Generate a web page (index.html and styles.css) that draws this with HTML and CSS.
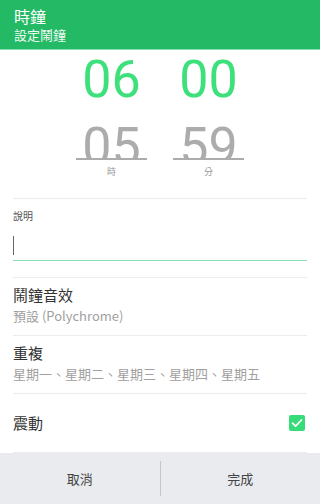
FILE: index.html
```html
<!DOCTYPE html>
<html lang="zh-Hant">
<head>
<meta charset="utf-8">
<link rel="stylesheet" href="styles.css">
</head>
<body>
<div class="app">
  <header class="header">
    <div class="title">時鐘</div>
    <div class="subtitle">設定鬧鐘</div>
  </header>
  <section class="picker">
    <div class="col">
      <div class="num current">06</div>
      <div class="clip"><div class="num prev">05</div></div>
      <div class="unit">時</div>
    </div>
    <div class="col">
      <div class="num current">00</div>
      <div class="clip"><div class="num prev">59</div></div>
      <div class="unit">分</div>
    </div>
  </section>
  <div class="divider"></div>
  <section class="desc">
    <div class="desc-label">說明</div>
    <div class="input"><span class="cursor"></span></div>
  </section>
  <div class="divider"></div>
  <div class="row">
    <div class="row-title">鬧鐘音效</div>
    <div class="row-sub">預設 (Polychrome)</div>
  </div>
  <div class="divider"></div>
  <div class="row">
    <div class="row-title">重複</div>
    <div class="row-sub">星期一、星期二、星期三、星期四、星期五</div>
  </div>
  <div class="divider"></div>
  <div class="row toggle">
    <div class="row-title">震動</div>
    <span class="check"><svg viewBox="0 0 16 16" width="16" height="16"><path d="M3.5 8.2 L6.6 11.2 L12.5 5" fill="none" stroke="#fff" stroke-width="1.8" stroke-linecap="round" stroke-linejoin="round"/></svg></span>
  </div>
  <div class="divider"></div>
  <footer class="footer">
    <div class="btn">取消</div>
    <div class="sep"></div>
    <div class="btn">完成</div>
  </footer>
</div>
</body>
</html>
```
FILE: styles.css
```css
* { box-sizing: border-box; }
html, body { margin: 0; padding: 0; }
body {
  width: 320px;
  height: 504px;
  overflow: hidden;
  background: #fff;
  font-family: "Noto Sans CJK TC", "Noto Sans", sans-serif;
}
.app { display: flex; flex-direction: column; height: 504px; }
.header {
  height: 50px;
  background: #24b964;
  color: #fff;
  padding: 5px 14px 0;
  border-bottom: 1px solid #7fe2b0;
}
.title { font-size: 16px; line-height: 22px; }
.subtitle { font-size: 13px; line-height: 16px; opacity: 0.92; }
.picker {
  display: flex;
  justify-content: center;
  gap: 26px;
}
.col { width: 71px; display: flex; flex-direction: column; align-items: center; }
.num {
  font-family: Roboto, "Noto Sans", sans-serif;
  font-size: 52px;
  line-height: 60px;
  height: 60px;
  text-align: center;
  width: 100%;
}
.current { color: #3ee07c; }
.clip {
  margin-top: 7px;
  height: 43px;
  width: 100%;
  overflow: hidden;
  border-bottom: 2px solid #acacac;
}
.num.prev {
  color: #acacac;
  line-height: 40px;
  height: 40px;
  margin-top: 10px;
}
.unit {
  margin-top: 6px;
  font-size: 9px;
  line-height: 12px;
  color: #999;
}
.divider {
  height: 1px;
  background: #ececec;
  margin: 0 13px;
  flex: none;
}
.picker + .divider { margin-top: 20px; }
.desc { padding: 10px 13px 16px; }
.desc-label { font-size: 10px; line-height: 14px; color: #555; }
.input {
  margin-top: 3px;
  height: 35px;
  border-bottom: 1px solid #86e3b6;
  position: relative;
}
.cursor {
  position: absolute;
  left: 0;
  top: 10px;
  width: 1px;
  height: 19px;
  background: #666;
}
.row { padding: 7px 13px 10px; }
.row-title { font-size: 15px; line-height: 20px; color: #333; }
.row-sub { margin-top: 2px; font-size: 13px; line-height: 18px; color: #a0a0a0; }
.toggle {
  height: 58px;
  padding: 0 15px 0 13px;
  display: flex;
  align-items: center;
  justify-content: space-between;
}
.check {
  width: 16px;
  height: 16px;
  border-radius: 2px;
  background: #35dc78;
  display: block;
}
.check svg { display: block; }
.footer {
  flex: 1;
  background: #e9ebee;
  display: flex;
  align-items: center;
}
.btn {
  flex: 1;
  text-align: center;
  font-size: 13px;
  color: #444;
}
.sep { width: 1px; height: 35px; background: #c4c6c9; }
```
